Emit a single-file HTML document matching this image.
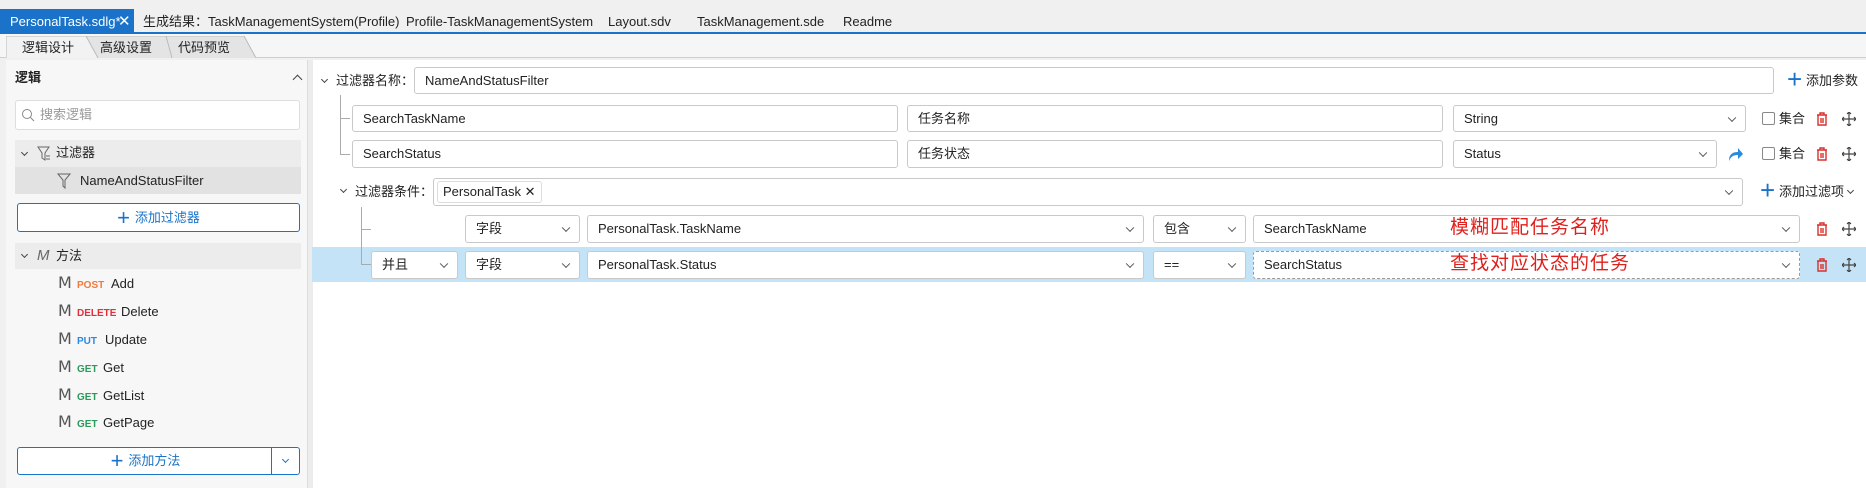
<!DOCTYPE html>
<html><head><meta charset="utf-8"><style>
*{box-sizing:border-box;margin:0;padding:0}
body{width:1866px;height:488px;overflow:hidden;background:#f0f0f0;font-family:"Liberation Sans","Noto Sans CJK SC",sans-serif;font-size:13px;line-height:16px;color:#222;position:relative}
.a{position:absolute}
.box{position:absolute;background:#fff;border:1px solid #c9c9c9;border-radius:3px;padding-left:10px;display:flex;align-items:center;font-size:13px}
.sel::after{content:"";position:absolute;right:10px;top:50%;width:5px;height:5px;border-right:1px solid #555;border-bottom:1px solid #555;transform:translateY(-70%) rotate(45deg)}
.tab{position:absolute;top:10px;height:23px;line-height:23px;font-size:13px;color:#222}
.trash{position:absolute;width:12px;height:14px}
.mv{position:absolute;width:14px;height:14px}
.hl{position:absolute;background:#e8e8e8}
.m{position:absolute;left:58px;font-size:16px;color:#555;font-family:"DejaVu Sans",sans-serif}
.bd{position:absolute;left:77px;font-weight:bold;font-size:10px}
.nm{position:absolute;font-size:13px}
.cb{position:absolute;width:13px;height:13px;border:1px solid #888;background:#fff;border-radius:2px}
.red{color:#e0201c;font-size:19px;line-height:22px;letter-spacing:1px;position:absolute}
</style></head><body>
<div class="a" style="left:0;top:9px;width:134px;height:24px;background:#1a73c8"></div>
<div class="tab" style="left:10px;color:#fff">PersonalTask.sdlg*</div>
<div class="tab" style="left:118px;color:#fff;font-size:15px">✕</div>
<div class="tab" style="left:143px">生成结果：TaskManagementSystem(Profile)</div>
<div class="tab" style="left:406px">Profile-TaskManagementSystem</div>
<div class="tab" style="left:608px">Layout.sdv</div>
<div class="tab" style="left:697px">TaskManagement.sde</div>
<div class="tab" style="left:843px">Readme</div>
<div class="a" style="left:0;top:32px;width:1866px;height:2px;background:#1a73c8"></div>
<div class="a" style="left:0;top:34px;width:1866px;height:24px;background:#f6f6f6;border-bottom:1px solid #cfcfcf"></div>
<svg class="a" style="left:6px;top:36px" width="250" height="22"><path d="M86 22L80 0H160L174 22" fill="#e4e4e4" stroke="#bbb"/><path d="M166 22L160 0H238L250 22" fill="#e4e4e4" stroke="#bbb"/><path d="M0 22V0H80L92 22" fill="#f2f2f2" stroke="#bbb"/></svg>
<div class="a" style="left:22px;top:40px">逻辑设计</div>
<div class="a" style="left:100px;top:40px">高级设置</div>
<div class="a" style="left:178px;top:40px">代码预览</div>
<div class="a" style="left:6px;top:60px;width:302px;height:428px;background:#f7f7f7;border-right:1px solid #ddd"></div>
<div class="a" style="left:308px;top:60px;width:5px;height:428px;background:#ececec"></div>
<div class="a" style="left:15px;top:70px;font-weight:bold">逻辑</div>
<div class="a" style="left:294px;top:76px;width:7px;height:7px;border-left:1.3px solid #444;border-top:1.3px solid #444;transform:rotate(45deg)"></div>
<div class="box" style="left:15px;top:100px;width:285px;height:30px;border-color:#ddd;color:#999;padding-left:24px">搜索逻辑</div>
<svg class="a" style="left:21px;top:108px" width="14" height="14"><circle cx="6" cy="6" r="4.5" fill="none" stroke="#888"/><path d="M9.5 9.5L13 13" stroke="#888"/></svg>
<div class="hl" style="left:15px;top:140px;width:286px;height:27px;background:#ececec"></div>
<div class="hl" style="left:15px;top:167px;width:286px;height:27px;background:#e2e2e2"></div>
<div class="a" style="left:22px;top:150px;width:5px;height:5px;border-right:1.2px solid #444;border-bottom:1.2px solid #444;transform:rotate(45deg)"></div>
<svg class="a" style="left:37px;top:146px" width="14" height="16"><path d="M1 1H12L8 7V14L5 12V7Z" fill="none" stroke="#666"/><path d="M9 10h4M9 13h4" stroke="#666"/></svg>
<div class="nm" style="left:56px;top:145px">过滤器</div>
<svg class="a" style="left:57px;top:173px" width="14" height="16"><path d="M1 1H13L8 7V15L6 13V7Z" fill="none" stroke="#666"/></svg>
<div class="nm" style="left:80px;top:173px">NameAndStatusFilter</div>
<div class="box" style="left:17px;top:203px;width:283px;height:29px;border-color:#1a73c8;justify-content:center;padding:0;color:#1a73c8"><span style="font-size:22px;margin-right:5px;line-height:20px">+</span>添加过滤器</div>
<div class="hl" style="left:15px;top:243px;width:286px;height:26px;background:#ececec"></div>
<div class="a" style="left:22px;top:252px;width:5px;height:5px;border-right:1.2px solid #444;border-bottom:1.2px solid #444;transform:rotate(45deg)"></div>
<div class="a" style="left:37px;top:248px;font-style:italic;color:#666;font-size:15px">M</div>
<div class="nm" style="left:56px;top:248px">方法</div>
<div class="m" style="top:275px">M</div><div class="bd" style="top:278px;color:#f07a3a">POST</div><div class="nm" style="left:111px;top:276px">Add</div>
<div class="m" style="top:303px">M</div><div class="bd" style="top:306px;color:#e0303a">DELETE</div><div class="nm" style="left:121px;top:304px">Delete</div>
<div class="m" style="top:331px">M</div><div class="bd" style="top:334px;color:#2a8ae0">PUT</div><div class="nm" style="left:105px;top:332px">Update</div>
<div class="m" style="top:359px">M</div><div class="bd" style="top:362px;color:#2a9a5a">GET</div><div class="nm" style="left:103px;top:360px">Get</div>
<div class="m" style="top:387px">M</div><div class="bd" style="top:390px;color:#2a9a5a">GET</div><div class="nm" style="left:103px;top:388px">GetList</div>
<div class="m" style="top:414px">M</div><div class="bd" style="top:417px;color:#2a9a5a">GET</div><div class="nm" style="left:103px;top:415px">GetPage</div>
<div class="box" style="left:17px;top:447px;width:283px;height:28px;border-color:#1a73c8;justify-content:center;padding:0 26px 0 0;color:#1a73c8"><span style="font-size:22px;margin-right:5px;line-height:20px">+</span>添加方法</div>
<div class="a" style="left:271px;top:448px;width:1px;height:26px;background:#1a73c8"></div>
<div class="a" style="left:283px;top:457px;width:5px;height:5px;border-right:1.2px solid #1a73c8;border-bottom:1.2px solid #1a73c8;transform:rotate(45deg)"></div>
<div class="a" style="left:313px;top:60px;width:1553px;height:428px;background:#fff"></div>
<div class="a" style="left:322px;top:77px;width:5px;height:5px;border-right:1.2px solid #444;border-bottom:1.2px solid #444;transform:rotate(45deg)"></div>
<div class="a" style="left:336px;top:73px">过滤器名称：</div>
<div class="box" style="left:414px;top:67px;width:1360px;height:27px">NameAndStatusFilter</div>
<div class="a" style="left:1787px;top:66px;color:#1a73c8;font-size:26px;line-height:26px">+</div>
<div class="a" style="left:1806px;top:73px">添加参数</div>
<div class="a" style="left:340px;top:95px;width:1px;height:60px;background:#aaa"></div>
<div class="a" style="left:340px;top:118px;width:10px;height:1px;background:#aaa"></div>
<div class="a" style="left:340px;top:154px;width:10px;height:1px;background:#aaa"></div>
<div class="box" style="left:352px;top:105px;width:546px;height:27px">SearchTaskName</div>
<div class="box" style="left:907px;top:105px;width:536px;height:27px">任务名称</div>
<div class="box sel" style="left:1453px;top:105px;width:293px;height:27px">String</div>
<div class="box" style="left:352px;top:140px;width:546px;height:28px">SearchStatus</div>
<div class="box" style="left:907px;top:140px;width:536px;height:28px">任务状态</div>
<div class="box sel" style="left:1453px;top:140px;width:264px;height:28px">Status</div>
<svg class="a" style="left:1727px;top:146px" width="16" height="16"><path d="M2 15C2 8 6 6 11 6V2L16 8L11 13V9C7 9 4 10 2 15Z" fill="#2a8ae0"/></svg>
<div class="cb" style="left:1762px;top:112px"></div><div class="a" style="left:1779px;top:111px">集合</div>
<div class="cb" style="left:1762px;top:147px"></div><div class="a" style="left:1779px;top:146px">集合</div>
<svg width="0" height="0" style="position:absolute"><defs>
<g id="tr"><path d="M1 3h10M4 3V1h4v2M2 3v10h8V3M5 6v5M7 6v5" fill="none" stroke="#d9302c" stroke-width="1.4"/></g>
<g id="mv"><path d="M7 0v14M0 7h14M5 2l2-2 2 2M5 12l2 2 2-2M2 5l-2 2 2 2M12 5l2 2-2 2" fill="none" stroke="#444" stroke-width="1.2"/></g>
</defs></svg>
<svg class="trash" style="left:1816px;top:112px"><use href="#tr"/></svg><svg class="mv" style="left:1842px;top:112px"><use href="#mv"/></svg>
<svg class="trash" style="left:1816px;top:147px"><use href="#tr"/></svg><svg class="mv" style="left:1842px;top:147px"><use href="#mv"/></svg>
<div class="a" style="left:341px;top:187px;width:5px;height:5px;border-right:1.2px solid #444;border-bottom:1.2px solid #444;transform:rotate(45deg)"></div>
<div class="a" style="left:355px;top:184px">过滤器条件：</div>
<div class="box sel" style="left:433px;top:178px;width:1310px;height:28px;padding-left:3px"><span style="border:1px solid #ddd;border-radius:3px;padding:2px 5px">PersonalTask ✕</span></div>
<div class="a" style="left:1760px;top:177px;color:#1a73c8;font-size:26px;line-height:26px">+</div>
<div class="a" style="left:1779px;top:184px">添加过滤项</div>
<div class="a" style="left:1848px;top:188px;width:5px;height:5px;border-right:1.2px solid #444;border-bottom:1.2px solid #444;transform:rotate(45deg)"></div>
<div class="a" style="left:312px;top:247px;width:1554px;height:35px;background:#c4e3f7"></div>
<div class="a" style="left:361px;top:207px;width:1px;height:58px;background:#aaa"></div>
<div class="a" style="left:361px;top:229px;width:10px;height:1px;background:#aaa"></div>
<div class="a" style="left:361px;top:264px;width:10px;height:1px;background:#aaa"></div>
<div class="box sel" style="left:465px;top:215px;width:115px;height:28px">字段</div>
<div class="box sel" style="left:587px;top:215px;width:557px;height:28px">PersonalTask.TaskName</div>
<div class="box sel" style="left:1153px;top:215px;width:93px;height:28px">包含</div>
<div class="box sel" style="left:1253px;top:215px;width:547px;height:28px">SearchTaskName</div>
<div class="red" style="left:1450px;top:217px">模糊匹配任务名称</div>
<div class="box sel" style="left:371px;top:251px;width:87px;height:28px">并且</div>
<div class="box sel" style="left:465px;top:251px;width:115px;height:28px">字段</div>
<div class="box sel" style="left:587px;top:251px;width:557px;height:28px">PersonalTask.Status</div>
<div class="box sel" style="left:1153px;top:251px;width:93px;height:28px">==</div>
<div class="box sel" style="left:1253px;top:251px;width:547px;height:28px;border-style:dashed;border-color:#999">SearchStatus</div>
<div class="red" style="left:1450px;top:253px">查找对应状态的任务</div>
<svg class="trash" style="left:1816px;top:222px"><use href="#tr"/></svg><svg class="mv" style="left:1842px;top:222px"><use href="#mv"/></svg>
<svg class="trash" style="left:1816px;top:258px"><use href="#tr"/></svg><svg class="mv" style="left:1842px;top:258px"><use href="#mv"/></svg>
</body></html>
